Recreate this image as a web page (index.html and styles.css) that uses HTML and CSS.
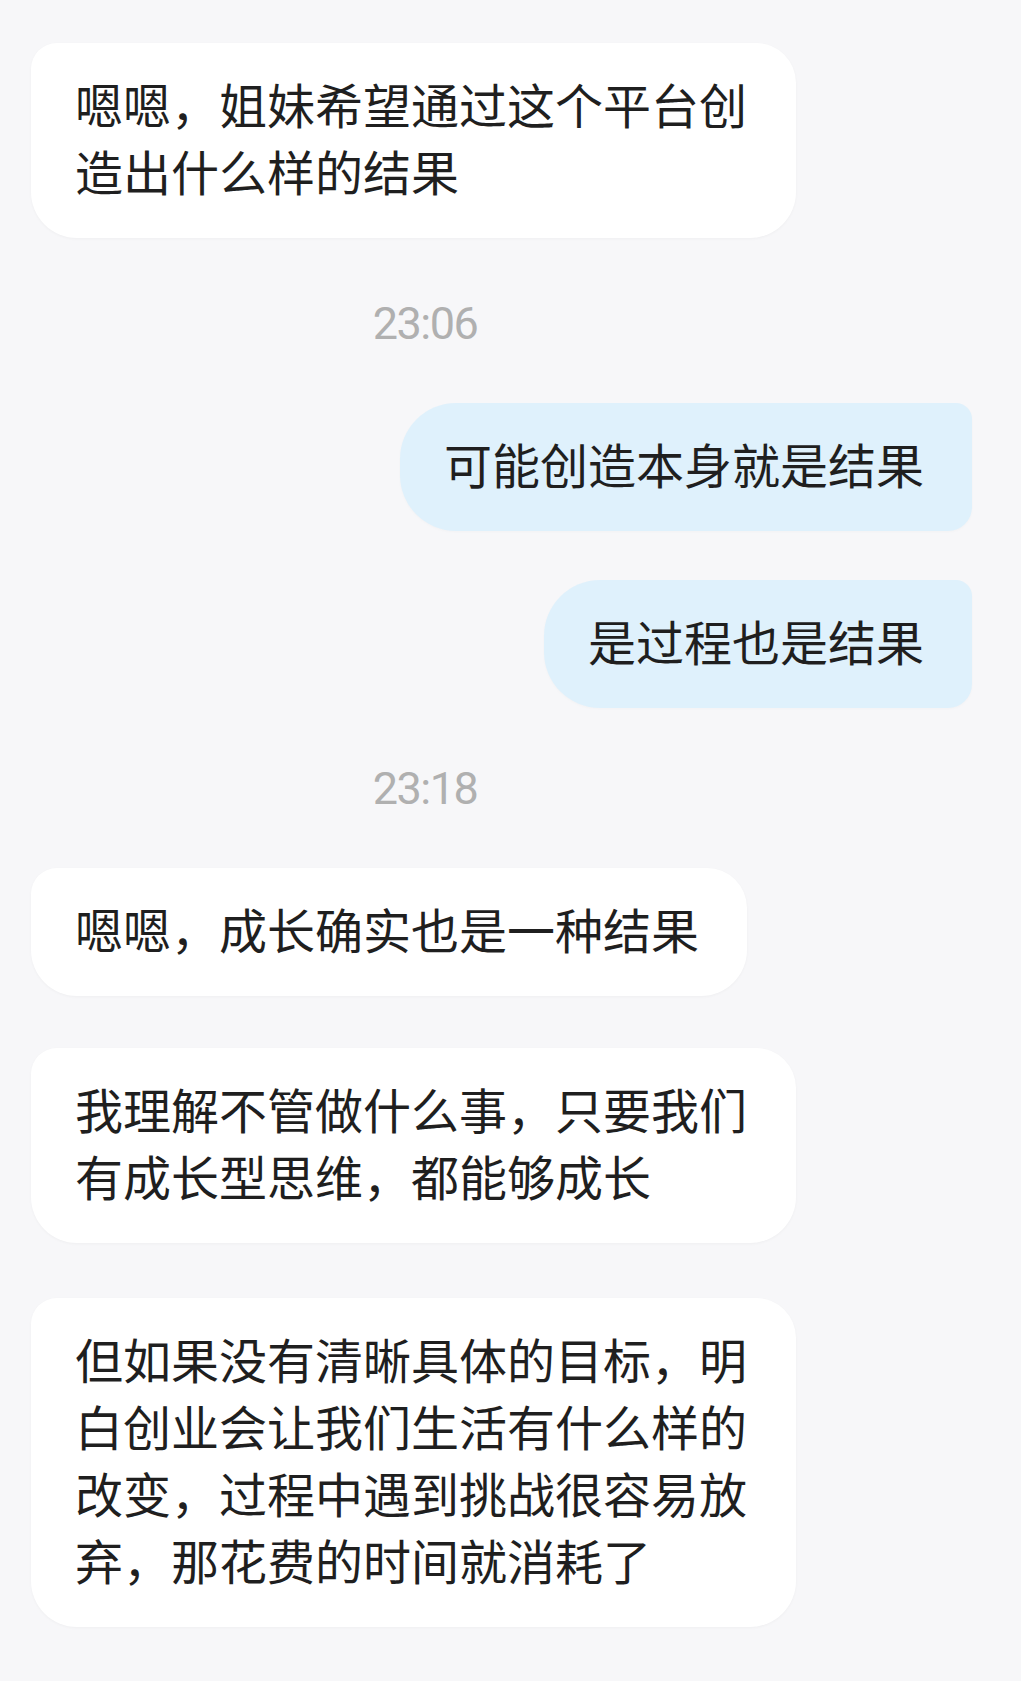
FILE: index.html
```html
<!DOCTYPE html>
<html lang="zh-CN">
<head>
<meta charset="utf-8">
<title>聊天记录</title>
<link rel="stylesheet" href="styles.css">
</head>
<body>
<main class="chat">
  <div class="row row-in b1">
    <div class="bubble bubble-in">嗯嗯，姐妹希望通过这个平台创造出什么样的结果</div>
  </div>
  <div class="time t1">23:06</div>
  <div class="row row-out r1">
    <div class="bubble bubble-out">可能创造本身就是结果</div>
  </div>
  <div class="row row-out r2">
    <div class="bubble bubble-out">是过程也是结果</div>
  </div>
  <div class="time t2">23:18</div>
  <div class="row row-in b2">
    <div class="bubble bubble-in">嗯嗯，成长确实也是一种结果</div>
  </div>
  <div class="row row-in b3">
    <div class="bubble bubble-in">我理解不管做什么事，只要我们有成长型思维，都能够成长</div>
  </div>
  <div class="row row-in b4">
    <div class="bubble bubble-in">但如果没有清晰具体的目标，明白创业会让我们生活有什么样的改变，过程中遇到挑战很容易放弃，那花费的时间就消耗了</div>
  </div>
</main>
</body>
</html>
```

FILE: styles.css
```css
html, body {
  margin: 0;
  padding: 0;
  background: #ffffff;
}

.chat {
  box-sizing: border-box;
  height: 1681px;
  padding-top: 43px;
  background: #f7f7f9;
  display: flex;
  flex-direction: column;
  font-family: "Noto Sans CJK SC", "Noto Sans", sans-serif;
  color: #1f1f1f;
}

.row {
  display: flex;
}

.row-in {
  justify-content: flex-start;
  padding-left: 31px;
}

.row-out {
  justify-content: flex-end;
  padding-right: 49px;
}

.bubble {
  box-sizing: border-box;
  max-width: 765px;
  padding: 27px 48px 34px 44px;
  font-size: 48px;
  line-height: 67px;
  letter-spacing: 0;
}

.bubble-in {
  background: #ffffff;
  border-radius: 26px 40px 46px 46px;
  box-shadow: 0 1px 3px rgba(0, 0, 0, 0.035);
}

.bubble-out {
  background: #dff1fc;
  border-radius: 56px 16px 24px 56px;
  box-shadow: 0 1px 3px rgba(0, 0, 0, 0.025);
}

.time {
  width: 850px;
  text-align: center;
  font-family: Roboto, "Liberation Sans", sans-serif;
  font-size: 45px;
  line-height: 48px;
  letter-spacing: -1.5px;
  color: #b0b0b0;
}

.t1 { margin-top: 62px; }
.r1 { margin-top: 55px; }
.r2 { margin-top: 49px; }
.t2 { margin-top: 57px; }
.b2 { margin-top: 55px; }
.b3 { margin-top: 52px; }
.b4 { margin-top: 55px; }
```
